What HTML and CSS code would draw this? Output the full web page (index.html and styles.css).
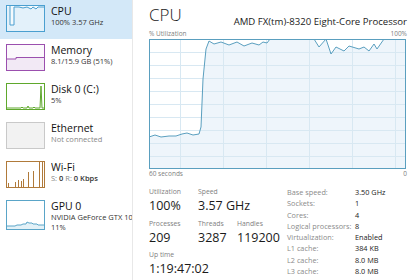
FILE: index.html
```html
<!DOCTYPE html>
<html>
<head>
<meta charset="utf-8">
<link rel="stylesheet" href="styles.css">
</head>
<body>
<div class="app">
  <nav class="side">
    <div class="item sel">
      <div class="thumb t-cpu">
        <svg width="37" height="25" viewBox="0 0 37 25">
          <polygon points="0,25 0,1 3,1 3,19 7,19 7,1 12,1 16,2 20,1 24,3 26,1 29,3 31,1 37,1 37,25" fill="#e3f1fa"/>
          <polyline points="3,0 3,19 7,19 7,1 12,1 16,2 20,1 24,3 26,1 29,3 31,1 37,1" fill="none" stroke="#4a9fd0" stroke-width="1"/>
        </svg>
      </div>
      <div class="txt"><div class="name">CPU</div><div class="sub">100% 3.57 GHz</div></div>
    </div>
    <div class="item">
      <div class="thumb t-mem">
        <svg width="37" height="25" viewBox="0 0 37 25">
          <polygon points="0,25 0,14 9,14 9,12.5 37,12.5 37,25" fill="#f2e9f5"/>
          <polyline points="0,14 9,14 9,12.5 37,12.5" fill="none" stroke="#9b4fae" stroke-width="1"/>
        </svg>
      </div>
      <div class="txt"><div class="name">Memory</div><div class="sub">8.1/15.9 GB (51%)</div></div>
    </div>
    <div class="item">
      <div class="thumb t-disk">
        <svg width="37" height="25" viewBox="0 0 37 25">
          <polyline points="0,24 14,24 15,23 16,24 20,24 21,22 22,24 26,24 27,23 28,24 33,24 34,2 35,24 37,24" fill="none" stroke="#5fa82c" stroke-width="1"/>
        </svg>
      </div>
      <div class="txt"><div class="name">Disk 0 (C:)</div><div class="sub">5%</div></div>
    </div>
    <div class="item">
      <div class="thumb t-eth"></div>
      <div class="txt"><div class="name">Ethernet</div><div class="sub muted">Not connected</div></div>
    </div>
    <div class="item">
      <div class="thumb t-wifi">
        <svg width="37" height="25" viewBox="0 0 37 25">
          <g stroke="#b07a3a" stroke-width="1">
            <line x1="1.5" y1="25" x2="1.5" y2="21"/>
            <line x1="8.5" y1="25" x2="8.5" y2="20"/>
            <line x1="11.5" y1="25" x2="11.5" y2="18"/>
            <line x1="14.5" y1="25" x2="14.5" y2="19"/>
            <line x1="16.5" y1="25" x2="16.5" y2="17"/>
            <line x1="21.5" y1="25" x2="21.5" y2="10"/>
            <line x1="26.5" y1="25" x2="26.5" y2="9"/>
            <line x1="32.5" y1="25" x2="32.5" y2="0"/>
            <line x1="35.5" y1="25" x2="35.5" y2="0"/>
          </g>
        </svg>
      </div>
      <div class="txt"><div class="name">Wi-Fi</div><div class="sub"><span class="muted">S:</span> <b>0</b> <span class="muted">R:</span> <b>0 Kbps</b></div></div>
    </div>
    <div class="item tall">
      <div class="thumb t-gpu">
        <svg width="37" height="28" viewBox="0 0 37 28">
          <polygon points="0,28 0,25 8,25 10,24 14,24 16,23 19,23 20,21 22,22 25,22 26,23 30,23 31,24 37,24 37,28" fill="#e3f1f7"/>
          <polyline points="0,25 8,25 10,24 14,24 16,23 19,23 20,21 22,22 25,22 26,23 30,23 31,24 37,24" fill="none" stroke="#5aa5c8" stroke-width="1"/>
        </svg>
      </div>
      <div class="txt"><div class="name">GPU 0</div><div class="sub clip">NVIDIA GeForce GTX 1050</div><div class="sub">11%</div></div>
    </div>
  </nav>
  <main class="main">
    <div class="head">
      <div class="title">CPU</div>
      <div class="proc">AMD FX(tm)-8320 Eight-Core Processor</div>
    </div>
    <div class="axis"><span>% Utilization</span><span>100%</span></div>
    <div class="graph">
      <svg width="257" height="130" viewBox="0 0 257 130">
        <rect x="0" y="0" width="257" height="130" fill="#ffffff"/>
        <polygon points="0,98 6,96 12,98 20,97 27,97 33,95 38,94 44,96 50,95 52,88 54,40 57,10 60,2 65,5 72,3 80,6 88,3 95,7 103,4 110,6 114,3 118,4 121,0 165,0 170,8 177,0 182,15 187,8 195,12 200,7 210,10 215,8 220,12 225,5 228,10 235,0 257,0 257,130 0,130" fill="#eef5fb"/>
        <g stroke="#d8e8f2" stroke-width="1">
          <line x1="0" y1="13.5" x2="257" y2="13.5"/>
          <line x1="0" y1="26.5" x2="257" y2="26.5"/>
          <line x1="0" y1="39.5" x2="257" y2="39.5"/>
          <line x1="0" y1="52.5" x2="257" y2="52.5"/>
          <line x1="0" y1="65.5" x2="257" y2="65.5"/>
          <line x1="0" y1="78.5" x2="257" y2="78.5"/>
          <line x1="0" y1="91.5" x2="257" y2="91.5"/>
          <line x1="0" y1="104.5" x2="257" y2="104.5"/>
          <line x1="0" y1="117.5" x2="257" y2="117.5"/>
          <line x1="31.5" y1="0" x2="31.5" y2="130"/>
          <line x1="74.5" y1="0" x2="74.5" y2="130"/>
          <line x1="117.5" y1="0" x2="117.5" y2="130"/>
          <line x1="160.5" y1="0" x2="160.5" y2="130"/>
          <line x1="203.5" y1="0" x2="203.5" y2="130"/>
          <line x1="246.5" y1="0" x2="246.5" y2="130"/>
        </g>
        <polyline points="0,98 6,96 12,98 20,97 27,97 33,95 38,94 44,96 50,95 52,88 54,40 57,10 60,2 65,5 72,3 80,6 88,3 95,7 103,4 110,6 114,3 118,4 121,0 165,0 170,8 177,0 182,15 187,8 195,12 200,7 210,10 215,8 220,12 225,5 228,10 235,0 257,0" fill="none" stroke="#5a9fbf" stroke-width="1"/>
      </svg>
    </div>
    <div class="axis"><span>60 seconds</span><span>0</span></div>
    <div class="stats">
      <div class="left">
        <div class="srow">
          <div class="stat w49"><div class="lbl">Utilization</div><div class="val">100%</div></div>
          <div class="stat"><div class="lbl">Speed</div><div class="val">3.57 GHz</div></div>
        </div>
        <div class="srow">
          <div class="stat w49"><div class="lbl">Processes</div><div class="val">209</div></div>
          <div class="stat w39"><div class="lbl">Threads</div><div class="val">3287</div></div>
          <div class="stat"><div class="lbl">Handles</div><div class="val">119200</div></div>
        </div>
        <div class="srow">
          <div class="stat"><div class="lbl">Up time</div><div class="val">1:19:47:02</div></div>
        </div>
      </div>
      <div class="right">
        <div class="k">Base speed:</div><div class="v">3.50 GHz</div>
        <div class="k">Sockets:</div><div class="v">1</div>
        <div class="k">Cores:</div><div class="v">4</div>
        <div class="k">Logical processors:</div><div class="v">8</div>
        <div class="k">Virtualization:</div><div class="v">Enabled</div>
        <div class="k">L1 cache:</div><div class="v">384 KB</div>
        <div class="k">L2 cache:</div><div class="v">8.0 MB</div>
        <div class="k">L3 cache:</div><div class="v">8.0 MB</div>
      </div>
    </div>
  </main>
</div>
</body>
</html>
```

FILE: styles.css
```css
html, body {
  margin: 0;
  padding: 0;
  background: #ffffff;
}
body {
  width: 420px;
  height: 280px;
  overflow: hidden;
  font-family: "Open Sans", "Noto Sans", sans-serif;
  color: #1a1a1a;
}
.app {
  display: flex;
  width: 420px;
  height: 280px;
}
.side {
  width: 132px;
  flex: none;
  border-right: 1px solid #e8e8e8;
  overflow: hidden;
}
.item {
  display: flex;
  height: 39px;
  box-sizing: border-box;
  padding: 5px 0 0 6px;
}
.item.tall {
  height: 48px;
}
.item.sel {
  background: #d3e8f8;
}
.thumb {
  width: 37px;
  height: 25px;
  border: 1px solid #999;
  flex: none;
  overflow: hidden;
}
.thumb svg {
  display: block;
}
.t-cpu { border-color: #4a9fd0; background: #f4fafd; }
.t-mem { border-color: #9b4fae; background: #fbf8fc; }
.t-disk { border-color: #5fa82c; background: #ffffff; }
.t-eth { border-color: #c9c9c9; background: #f2f2f2; }
.t-wifi { border-color: #b07a3a; background: #ffffff; }
.t-gpu { border-color: #5aa5c8; background: #ffffff; height: 28px; }
.txt {
  margin-left: 6px;
  min-width: 0;
  flex: 1;
  overflow: hidden;
  white-space: nowrap;
}
.name {
  font-size: 10.5px;
  line-height: 12px;
  color: #111;
}
.sub {
  font-size: 7.5px;
  line-height: 10px;
  color: #333;
}
.sub b {
  font-weight: 600;
  color: #333;
}
.muted {
  color: #888;
}
.clip {
  overflow: hidden;
  text-overflow: clip;
}
.main {
  flex: 1;
  padding: 0 13px 0 16px;
  min-width: 0;
}
.head {
  display: flex;
  justify-content: space-between;
  align-items: flex-end;
  height: 29px;
}
.title {
  font-size: 17px;
  font-weight: 300;
  line-height: 20px;
  margin-bottom: 4px;
}
.proc {
  font-size: 9.6px;
  line-height: 12px;
  margin-bottom: 1px;
  color: #222;
}
.axis {
  display: flex;
  justify-content: space-between;
  font-size: 6.5px;
  line-height: 10px;
  color: #808080;
}
.graph {
  width: 255px;
  height: 128px;
  border: 1px solid #5a9fbf;
  overflow: hidden;
}
.graph svg {
  display: block;
  margin: -1px 0 0 -1px;
}
.stats {
  display: flex;
  margin-top: 8px;
}
.left {
  width: 138px;
  flex: none;
}
.srow {
  display: flex;
  height: 31.5px;
}
.w49 { width: 49px; }
.w39 { width: 39px; }
.lbl {
  font-size: 6.8px;
  line-height: 10px;
  color: #808080;
}
.val {
  font-size: 12.5px;
  line-height: 17px;
  color: #1a1a1a;
}
.right {
  display: grid;
  grid-template-columns: 68px auto;
  grid-auto-rows: 11.3px;
  font-size: 7.3px;
  line-height: 11.3px;
  margin-top: 0;
}
.k { color: #8a8a8a; }
.v { color: #222; }
```
